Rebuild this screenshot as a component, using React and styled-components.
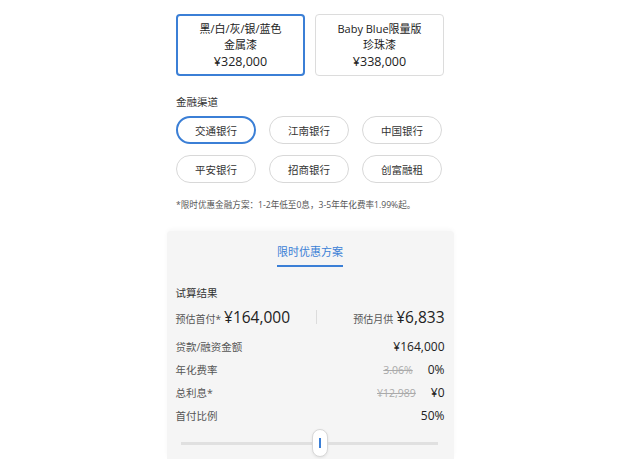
import React from 'react';
import styled, { createGlobalStyle } from 'styled-components';

const GlobalStyle = createGlobalStyle`
  body {
    margin: 0;
    background: #ffffff;
    font-family: "Open Sans", "Noto Sans CJK SC", sans-serif;
    color: #222;
  }
`;

const colors = [
  { id: 1, lines: ['黑/白/灰/银/蓝色', '金属漆'], price: '¥328,000', active: true },
  { id: 2, lines: ['Baby Blue限量版', '珍珠漆'], price: '¥338,000', active: false },
];

const banks = ['交通银行', '江南银行', '中国银行', '平安银行', '招商银行', '创富融租'];

const rows = [
  { label: '贷款/融资金额', old: null, value: '¥164,000' },
  { label: '年化费率', old: '3.06%', value: '0%' },
  { label: '总利息*', old: '¥12,989', value: '¥0' },
  { label: '首付比例', old: null, value: '50%' },
];

const App = () => (
  <>
    <GlobalStyle />
    <Page>
      <Column>
        <CardRow>
          {colors.map((c) => (
            <ColorCard key={c.id} $active={c.active}>
              {c.lines.map((l) => (
                <CardLine key={l}>{l}</CardLine>
              ))}
              <CardPrice>{c.price}</CardPrice>
            </ColorCard>
          ))}
        </CardRow>

        <SectionTitle>金融渠道</SectionTitle>
        <PillGrid>
          {banks.map((b, i) => (
            <Pill key={b} $active={i === 0}>{b}</Pill>
          ))}
        </PillGrid>
        <Note>*限时优惠金融方案：1-2年低至0息，3-5年年化费率1.99%起。</Note>
      </Column>

      <Panel>
        <TabBar>
          <Tab>限时优惠方案</Tab>
        </TabBar>
        <ResultTitle>试算结果</ResultTitle>
        <SummaryRow>
          <SummaryItem>
            <SummaryLabel>预估首付*</SummaryLabel>
            <SummaryValue>¥164,000</SummaryValue>
          </SummaryItem>
          <Divider />
          <SummaryItem $right>
            <SummaryLabel>预估月供</SummaryLabel>
            <SummaryValue>¥6,833</SummaryValue>
          </SummaryItem>
        </SummaryRow>
        <Details>
          {rows.map((r) => (
            <DetailRow key={r.label}>
              <DetailLabel>{r.label}</DetailLabel>
              <DetailValues>
                {r.old && <OldValue>{r.old}</OldValue>}
                <DetailValue>{r.value}</DetailValue>
              </DetailValues>
            </DetailRow>
          ))}
        </Details>
        <Slider>
          <Track $w={131} />
          <Thumb>
            <ThumbMark />
          </Thumb>
          <Track />
        </Slider>
      </Panel>
    </Page>
  </>
);

const Page = styled.div`
  width: 620px;
  height: 459px;
  overflow: hidden;
  display: flex;
  flex-direction: column;
  align-items: center;
  padding-top: 14px;
  box-sizing: border-box;
`;

const Column = styled.div`
  width: 268px;
  display: flex;
  flex-direction: column;
`;

const CardRow = styled.div`
  display: grid;
  grid-template-columns: 1fr 1fr;
  gap: 10px;
`;

const ColorCard = styled.div`
  height: 62px;
  box-sizing: border-box;
  border: ${({ $active }) => ($active ? '2px solid #3b7fd6' : '1px solid #dcdcdc')};
  border-radius: 4px;
  display: flex;
  flex-direction: column;
  align-items: center;
  justify-content: center;
  font-size: 11px;
  line-height: 16px;
  color: #222;
  padding-top: 2px;
`;

const CardLine = styled.div``;

const CardPrice = styled.div`
  font-size: 12.5px;
  line-height: 18px;
`;

const SectionTitle = styled.div`
  margin-top: 19px;
  font-size: 10.5px;
  line-height: 14px;
  color: #333;
`;

const PillGrid = styled.div`
  margin-top: 7px;
  display: grid;
  grid-template-columns: repeat(3, 80px);
  column-gap: 13px;
  row-gap: 11px;
`;

const Pill = styled.div`
  height: 28px;
  box-sizing: border-box;
  border-radius: 14px;
  border: ${({ $active }) => ($active ? '2px solid #3b7fd6' : '1px solid #d8d8d8')};
  display: flex;
  align-items: center;
  justify-content: center;
  font-size: 10.5px;
  color: #333;
`;

const Note = styled.div`
  margin-top: 16px;
  font-size: 8.6px;
  line-height: 12px;
  color: #555;
  white-space: nowrap;
`;

const Panel = styled.div`
  margin-top: 20px;
  width: 287px;
  box-sizing: border-box;
  background: #f5f5f5;
  border-radius: 4px 4px 0 0;
  box-shadow: 0 -2px 4px rgba(0, 0, 0, 0.03);
  padding: 0 9px 0 9px;
  flex: 1;
`;

const TabBar = styled.div`
  display: flex;
  justify-content: center;
  padding-top: 13px;
`;

const Tab = styled.div`
  font-size: 11px;
  line-height: 16px;
  color: #3b7fd6;
  padding-bottom: 5px;
  white-space: nowrap;
  border-bottom: 2px solid #3b7fd6;
`;

const ResultTitle = styled.div`
  margin-top: 19px;
  font-size: 10.5px;
  line-height: 14px;
  color: #333;
`;

const SummaryRow = styled.div`
  margin-top: 6px;
  display: flex;
  align-items: center;
  height: 22px;
`;

const SummaryItem = styled.div`
  display: flex;
  align-items: baseline;
  gap: 3px;
  margin-left: ${({ $right }) => ($right ? 'auto' : '0')};
`;

const SummaryLabel = styled.span`
  font-size: 10px;
  color: #555;
`;

const SummaryValue = styled.span`
  font-size: 15.5px;
  color: #222;
`;

const Divider = styled.div`
  width: 1px;
  height: 14px;
  background: #dcdcdc;
  margin-left: 26px;
`;

const Details = styled.div`
  margin-top: 7px;
`;

const DetailRow = styled.div`
  display: flex;
  justify-content: space-between;
  align-items: center;
  height: 23px;
  font-size: 10.5px;
  color: #555;
`;

const DetailLabel = styled.span``;

const DetailValues = styled.div`
  display: flex;
  align-items: center;
  gap: 15px;
`;

const OldValue = styled.span`
  font-size: 10.5px;
  color: #aaa;
  text-decoration: line-through;
`;

const DetailValue = styled.span`
  font-size: 12px;
  color: #222;
`;

const Slider = styled.div`
  margin-top: 2px;
  display: flex;
  align-items: center;
  padding: 0 7px 0 5px;
`;

const Track = styled.div`
  flex: ${({ $w }) => ($w ? `0 0 ${$w}px` : '1')};
  height: 3px;
  background: #e0e0e0;
`;

const Thumb = styled.div`
  width: 16px;
  height: 28px;
  box-sizing: border-box;
  border: 1px solid #d8d8d8;
  border-radius: 8px;
  background: #fff;
  box-shadow: 0 1px 3px rgba(0, 0, 0, 0.08);
  display: flex;
  align-items: center;
  justify-content: center;
`;

const ThumbMark = styled.div`
  width: 2px;
  height: 10px;
  background: #3b7fd6;
`;

export default App;
